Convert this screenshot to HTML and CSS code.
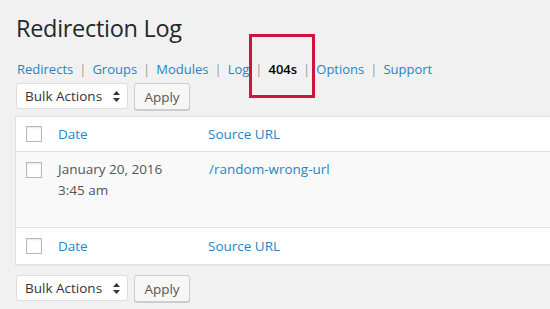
FILE: index.html
```html
<!DOCTYPE html>
<html>
<head>
<meta charset="utf-8">
<link rel="stylesheet" href="styles.css">
</head>
<body>
<div class="wrap">
  <h1 class="title">Redirection Log</h1>
  <ul class="subnav">
    <li><a href="#">Redirects</a><span class="sep">|</span></li>
    <li><a href="#">Groups</a><span class="sep">|</span></li>
    <li><a href="#">Modules</a><span class="sep">|</span></li>
    <li><a href="#">Log</a><span class="sep">|</span></li>
    <li class="current-item"><span class="current">404s</span><span class="sep">|</span><span class="highlight"></span></li>
    <li><a href="#">Options</a><span class="sep">|</span></li>
    <li><a href="#">Support</a></li>
  </ul>
  <div class="actions">
    <div class="select">Bulk Actions<svg class="arrows" width="7" height="11" viewBox="0 0 7 11"><path d="M3.5 0 L7 4 L0 4 Z M3.5 11 L7 7 L0 7 Z" fill="#333"/></svg></div>
    <div class="button">Apply</div>
  </div>
  <div class="table">
    <div class="row head">
      <div class="cb"><span class="box"></span></div>
      <div class="col-date"><a href="#">Date</a></div>
      <div class="col-url"><a href="#">Source URL</a></div>
    </div>
    <div class="row body">
      <div class="cb"><span class="box"></span></div>
      <div class="col-date text">January 20, 2016<br>3:45 am</div>
      <div class="col-url"><a href="#">/random-wrong-url</a></div>
    </div>
    <div class="row foot">
      <div class="cb"><span class="box"></span></div>
      <div class="col-date"><a href="#">Date</a></div>
      <div class="col-url"><a href="#">Source URL</a></div>
    </div>
  </div>
  <div class="actions bottom">
    <div class="select">Bulk Actions<svg class="arrows" width="7" height="11" viewBox="0 0 7 11"><path d="M3.5 0 L7 4 L0 4 Z M3.5 11 L7 7 L0 7 Z" fill="#333"/></svg></div>
    <div class="button">Apply</div>
  </div>
</div>
</body>
</html>
```
FILE: styles.css
```css
html, body {
  margin: 0;
  padding: 0;
  background: #f1f1f1;
  overflow: hidden;
  width: 550px;
  height: 309px;
}
body {
  font-family: "Open Sans", "Liberation Sans", sans-serif;
  color: #23282d;
}
.wrap {
  padding-left: 15px;
  width: 600px;
}
.title {
  margin: 0;
  padding: 12px 0 0 1px;
  font-size: 23.5px;
  font-weight: 400;
  line-height: 32px;
  color: #23282d;
  letter-spacing: -0.3px;
}
a {
  color: #1f86c3;
  text-decoration: none;
}
.subnav {
  list-style: none;
  margin: 17px 0 0 2px;
  padding: 0;
  display: flex;
  font-size: 13px;
  line-height: 16px;
}
.subnav li {
  display: flex;
  position: relative;
}
.sep {
  color: #999;
  padding: 0 6px 0 6px;
}
.current {
  font-weight: 600;
  color: #000;
}
.highlight {
  position: absolute;
  left: -19px;
  top: -27px;
  width: 60px;
  height: 58px;
  border: 3px solid #d2133d;
}
.actions {
  display: flex;
  gap: 6px;
  margin-top: 6px;
  padding-left: 1px;
}
.select {
  width: 112px;
  height: 26px;
  box-sizing: border-box;
  background: #fff;
  border: 1px solid #ddd;
  border-radius: 4px;
  display: flex;
  align-items: center;
  justify-content: space-between;
  padding: 0 7px 0 8px;
  font-size: 13.5px;
  color: #333;
}
.button {
  width: 56px;
  height: 27px;
  box-sizing: border-box;
  background: #f7f7f7;
  border: 1px solid #ccc;
  border-radius: 3px;
  box-shadow: 0 1px 0 #ccc;
  display: flex;
  align-items: center;
  justify-content: center;
  font-size: 13.5px;
  color: #555;
}
.table {
  margin-top: 6px;
  border: 1px solid #e1e1e1;
  background: #fff;
  box-shadow: 0 1px 1px rgba(0,0,0,0.04);
}
.row {
  display: flex;
  font-size: 13.5px;
}
.row.head {
  height: 34px;
  align-items: center;
  border-bottom: 1px solid #e1e1e1;
}
.row.body {
  height: 76px;
  background: #f9f9f9;
  align-items: flex-start;
  box-sizing: border-box;
  border-bottom: 1px solid #e1e1e1;
}
.row.foot {
  height: 36px;
  align-items: center;
}
.cb {
  width: 42px;
  padding-left: 10px;
  box-sizing: border-box;
  display: flex;
}
.row.body .cb { padding-top: 10px; }
.box {
  width: 16px;
  height: 16px;
  box-sizing: border-box;
  border: 1px solid #b4b9be;
  background: #fff;
  box-shadow: inset 0 1px 2px rgba(0,0,0,0.1);
}
.col-date {
  width: 150px;
}
.row.body .col-date,
.row.body .col-url {
  padding-top: 7px;
  line-height: 21px;
}
.text { color: #555; }
.col-url {
  flex: 1;
}
.row.body .col-url { padding-left: 1px; }
.actions.bottom {
  margin-top: 10px;
}
```
